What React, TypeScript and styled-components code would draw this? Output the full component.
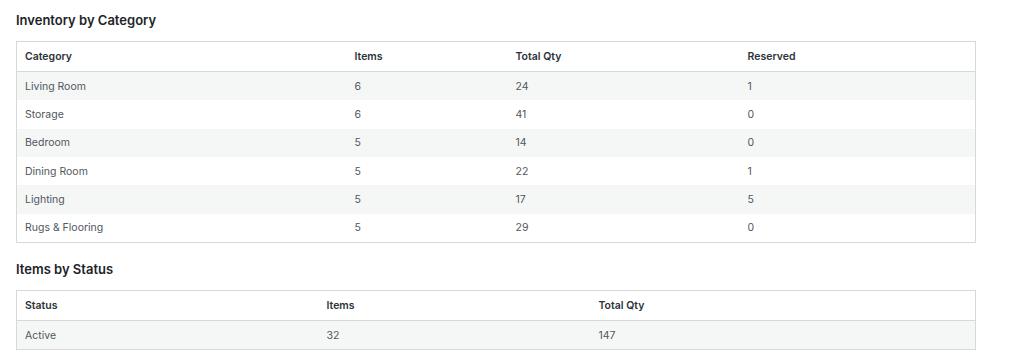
import React from 'react';
import styled, { createGlobalStyle } from 'styled-components';

type Column = { label: string; width: number };

const categoryColumns: Column[] = [
  { label: 'Category', width: 330 },
  { label: 'Items', width: 161 },
  { label: 'Total Qty', width: 232 },
  { label: 'Reserved', width: 236 },
];

const categoryRows = [
  ['Living Room', '6', '24', '1'],
  ['Storage', '6', '41', '0'],
  ['Bedroom', '5', '14', '0'],
  ['Dining Room', '5', '22', '1'],
  ['Lighting', '5', '17', '5'],
  ['Rugs & Flooring', '5', '29', '0'],
];

const statusColumns: Column[] = [
  { label: 'Status', width: 302 },
  { label: 'Items', width: 272 },
  { label: 'Total Qty', width: 385 },
];

const statusRows = [['Active', '32', '147']];

const ReportTable: React.FC<{ columns: Column[]; rows: string[][] }> = ({ columns, rows }) => (
  <Table>
    <colgroup>
      {columns.map((c) => (
        <col key={c.label} style={{ width: c.width }} />
      ))}
    </colgroup>
    <thead>
      <tr>
        {columns.map((c) => (
          <Th key={c.label}>{c.label}</Th>
        ))}
      </tr>
    </thead>
    <tbody>
      {rows.map((row, i) => (
        <Tr key={i} $striped={i % 2 === 0}>
          {row.map((cell, j) => (
            <Td key={j}>{cell}</Td>
          ))}
        </Tr>
      ))}
    </tbody>
  </Table>
);

const App: React.FC = () => {
  return (
    <Page>
      <GlobalStyle />
      <Section>
        <Title>Inventory by Category</Title>
        <ReportTable columns={categoryColumns} rows={categoryRows} />
      </Section>
      <Section>
        <Title>Items by Status</Title>
        <ReportTable columns={statusColumns} rows={statusRows} />
      </Section>
    </Page>
  );
};

const GlobalStyle = createGlobalStyle`
  body {
    margin: 0;
    background: #fff;
    font-family: Inter, "Liberation Sans", Arial, sans-serif;
  }
`;

const Page = styled.div`
  padding: 11px 16px 0;
  width: 959px;
  display: flex;
  flex-direction: column;
  gap: 17px;
`;

const Section = styled.section`
  display: flex;
  flex-direction: column;
  gap: 12px;
`;

const Title = styled.h3`
  margin: 0;
  font-size: 13px;
  line-height: 18px;
  font-weight: 600;
  color: #1d2327;
`;

const Table = styled.table`
  width: 959px;
  table-layout: fixed;
  border-collapse: collapse;
  border: 1px solid #d6d8da;
  font-size: 10.5px;
`;

const Th = styled.th`
  text-align: left;
  font-weight: 600;
  color: #2c3338;
  height: 29px;
  padding: 0 8px;
  border-bottom: 1px solid #d6d8da;
`;

const Tr = styled.tr<{ $striped: boolean }>`
  background: ${(p) => (p.$striped ? '#f5f6f6' : '#fff')};
`;

const Td = styled.td`
  height: 28.34px;
  padding: 0 8px;
  color: #50575e;
`;

export default App;
